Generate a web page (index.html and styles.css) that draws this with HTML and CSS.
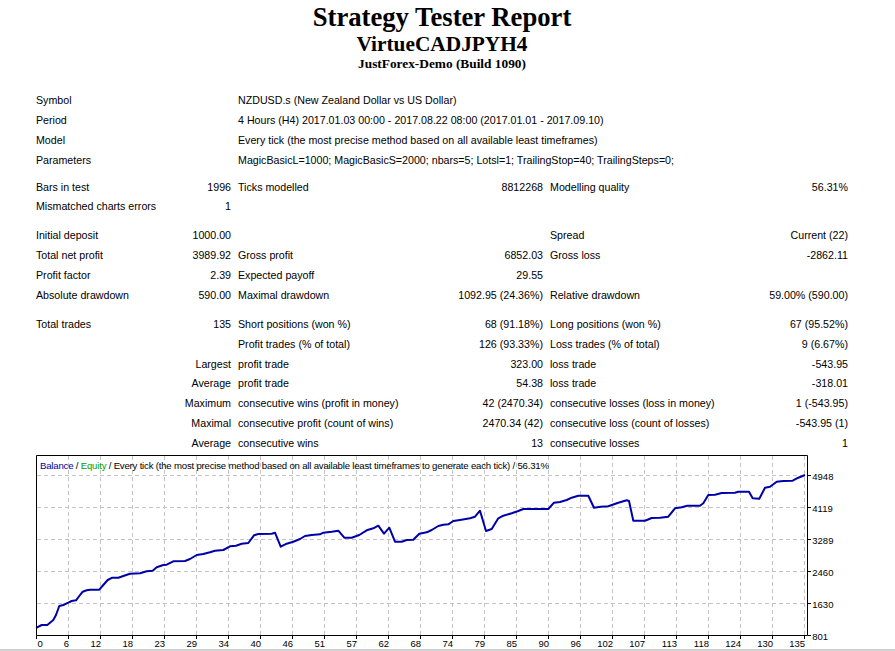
FILE: index.html
```html
<!DOCTYPE html>
<html>
<head>
<meta charset="utf-8">
<title>Strategy Tester: VirtueCADJPYH4</title>
<link rel="stylesheet" href="styles.css">
</head>
<body>
<div class="page">
  <header class="head">
    <div class="h1">Strategy Tester Report</div>
    <div class="h2">VirtueCADJPYH4</div>
    <div class="h3">JustForex-Demo (Build 1090)</div>
  </header>

  <table class="report">
    <colgroup>
      <col class="c1"><col class="c2"><col class="c3"><col class="c4"><col class="c5"><col class="c6">
    </colgroup>
    <tr><td colspan="2">Symbol</td><td colspan="4">NZDUSD.s (New Zealand Dollar vs US Dollar)</td></tr>
    <tr><td colspan="2">Period</td><td colspan="4">4 Hours (H4) 2017.01.03 00:00 - 2017.08.22 08:00 (2017.01.01 - 2017.09.10)</td></tr>
    <tr><td colspan="2">Model</td><td colspan="4">Every tick (the most precise method based on all available least timeframes)</td></tr>
    <tr><td colspan="2">Parameters</td><td colspan="4">MagicBasicL=1000; MagicBasicS=2000; nbars=5; Lotsl=1; TrailingStop=40; TrailingSteps=0;</td></tr>
    <tr class="sp sp-s"><td colspan="6"></td></tr>
    <tr><td>Bars in test</td><td class="r">1996</td><td>Ticks modelled</td><td class="r">8812268</td><td>Modelling quality</td><td class="r">56.31%</td></tr>
    <tr><td>Mismatched charts errors</td><td class="r">1</td><td></td><td></td><td></td><td></td></tr>
    <tr class="sp"><td colspan="6"></td></tr>
    <tr><td>Initial deposit</td><td class="r">1000.00</td><td></td><td></td><td>Spread</td><td class="r">Current (22)</td></tr>
    <tr><td>Total net profit</td><td class="r">3989.92</td><td>Gross profit</td><td class="r">6852.03</td><td>Gross loss</td><td class="r">-2862.11</td></tr>
    <tr><td>Profit factor</td><td class="r">2.39</td><td>Expected payoff</td><td class="r">29.55</td><td></td><td></td></tr>
    <tr><td>Absolute drawdown</td><td class="r">590.00</td><td>Maximal drawdown</td><td class="r">1092.95 (24.36%)</td><td>Relative drawdown</td><td class="r">59.00% (590.00)</td></tr>
    <tr class="sp"><td colspan="6"></td></tr>
    <tr><td>Total trades</td><td class="r">135</td><td>Short positions (won %)</td><td class="r">68 (91.18%)</td><td>Long positions (won %)</td><td class="r">67 (95.52%)</td></tr>
    <tr><td></td><td></td><td>Profit trades (% of total)</td><td class="r">126 (93.33%)</td><td>Loss trades (% of total)</td><td class="r">9 (6.67%)</td></tr>
    <tr><td></td><td class="r">Largest</td><td>profit trade</td><td class="r">323.00</td><td>loss trade</td><td class="r">-543.95</td></tr>
    <tr><td></td><td class="r">Average</td><td>profit trade</td><td class="r">54.38</td><td>loss trade</td><td class="r">-318.01</td></tr>
    <tr><td></td><td class="r">Maximum</td><td>consecutive wins (profit in money)</td><td class="r">42 (2470.34)</td><td>consecutive losses (loss in money)</td><td class="r">1 (-543.95)</td></tr>
    <tr><td></td><td class="r">Maximal</td><td>consecutive profit (count of wins)</td><td class="r">2470.34 (42)</td><td>consecutive loss (count of losses)</td><td class="r">-543.95 (1)</td></tr>
    <tr><td></td><td class="r">Average</td><td>consecutive wins</td><td class="r">13</td><td>consecutive losses</td><td class="r">1</td></tr>
  </table>

  <svg class="chart" width="820" height="200" viewBox="0 0 820 200" xmlns="http://www.w3.org/2000/svg">
    <g class="grid">
      <path d="M5 20.5H775M5 52.5H775M5 84.5H775M5 116.5H775M5 148.5H775"/>
      <path d="M36.5 1V180M68.5 1V180M100.5 1V180M132.5 1V180M164.5 1V180M196.5 1V180M228.5 1V180M260.5 1V180M292.5 1V180M324.5 1V180M356.5 1V180M388.5 1V180M420.5 1V180M452.5 1V180M484.5 1V180M516.5 1V180M548.5 1V180M580.5 1V180M612.5 1V180M644.5 1V180M676.5 1V180M708.5 1V180M740.5 1V180M772.5 1V180"/>
    </g>
    <path class="frame" d="M4.5 0.5H775.5V180.5H4.5Z"/>
    <path class="ticks" d="M775.5 20.5H779M775.5 52.5H779M775.5 84.5H779M775.5 116.5H779M775.5 148.5H779M775.5 180.5H779M4.5 180.5V184M36.5 180.5V184M68.5 180.5V184M100.5 180.5V184M132.5 180.5V184M164.5 180.5V184M196.5 180.5V184M228.5 180.5V184M260.5 180.5V184M292.5 180.5V184M324.5 180.5V184M356.5 180.5V184M388.5 180.5V184M420.5 180.5V184M452.5 180.5V184M484.5 180.5V184M516.5 180.5V184M548.5 180.5V184M580.5 180.5V184M612.5 180.5V184M644.5 180.5V184M676.5 180.5V184M708.5 180.5V184M740.5 180.5V184M772.5 180.5V184"/>
    <polyline class="balance" points="4.7,172.7 9.7,170 15.3,170 21.3,165 24,160 27.3,151 31.3,150 36.3,147.7 39.7,146 44,145.3 47.3,141 50.7,136.7 54.7,135.3 58,134.7 67.3,134.7 71.3,130 75.7,125 80.3,122.7 86.3,122.7 91.3,121 98,118.7 108,118.3 114.7,116.3 120.7,115.7 124.7,112.3 131.3,110 134.7,109.7 141.3,106.3 153,106 158,104 164.7,100 171.3,99 178,97.3 183,95.7 191.3,95 198,91.3 204,90.7 209.7,88.7 216.3,88 222,80.3 226.3,79 239.7,78.7 243,77.7 248.7,91.7 254.7,88.7 261.3,86.7 268,84 273,81 279.7,80 288,79.3 291.3,77.7 299.7,76.7 306.3,75.7 312.3,82.7 319.7,82.7 327.3,80 334.7,75.3 341.3,73.3 346.3,70.7 352,78.7 357.3,72.7 363,86.7 369.7,86.7 374.7,85 381.3,84.7 387.3,78.7 394.7,77.3 399.7,75 406.3,71 411.3,69.7 416.3,69.3 421.3,66 428,65 438,63.3 443,61.7 448,55.7 454,76 459.7,74 466.3,63.3 471.3,60.7 479.7,58.3 486.3,56 491.3,54 516.3,54 522,47.7 528,47 534.7,45 539.7,42.7 546.3,40.7 556.3,40.7 562,52.7 568.7,51.7 576.3,51.3 586.3,47.7 594.7,45.3 597,46 601.3,65.7 613,65.7 619.7,63 628,62.7 636.3,61.7 643,53.3 649.7,52.3 655.3,50.7 668,50.7 671.3,48.3 676.3,40 683,39.7 689.7,38 703,37.7 706.3,36.7 717,36.7 720.7,43.3 727.3,43.7 733,32.7 738,31.7 744.7,26.7 751.3,26 760.7,25.7 766.3,22.7 773,20"/>
    <text class="legend" x="8" y="13.5" textLength="509" lengthAdjust="spacing"><tspan class="lg-bal">Balance</tspan> / <tspan class="lg-eq">Equity</tspan> / Every tick (the most precise method based on all available least timeframes to generate each tick) / 56.31%</text>
    <g class="ylab">
      <text x="780.3" y="25">4948</text>
      <text x="780.3" y="57">4119</text>
      <text x="780.3" y="89">3289</text>
      <text x="780.3" y="121">2460</text>
      <text x="780.3" y="153">1630</text>
      <text x="780.3" y="185">801</text>
    </g>
    <g class="xlab">
      <text x="5.5" y="192" class="first">0</text>
      <text x="37" y="192">6</text>
      <text x="69" y="192">12</text>
      <text x="101" y="192">18</text>
      <text x="133" y="192">23</text>
      <text x="165" y="192">29</text>
      <text x="197" y="192">34</text>
      <text x="229" y="192">40</text>
      <text x="261" y="192">46</text>
      <text x="293" y="192">51</text>
      <text x="325" y="192">57</text>
      <text x="357" y="192">62</text>
      <text x="389" y="192">68</text>
      <text x="421" y="192">74</text>
      <text x="453" y="192">79</text>
      <text x="485" y="192">85</text>
      <text x="517" y="192">90</text>
      <text x="549" y="192">96</text>
      <text x="581" y="192">102</text>
      <text x="613" y="192">107</text>
      <text x="645" y="192">113</text>
      <text x="677" y="192">118</text>
      <text x="709" y="192">124</text>
      <text x="741" y="192">130</text>
      <text x="773" y="192">135</text>
    </g>
  </svg>
</div>
<div class="edge"></div>
</body>
</html>
```

FILE: styles.css
```css
html, body {
  margin: 0;
  background: #ffffff;
}

body {
  padding: 0 8px;
  color: #000000;
  font-family: "Liberation Sans", Arial, sans-serif;
}

.page {
  width: 868px;
}

/* ---------- heading ---------- */
.head {
  padding-top: 2px;
  text-align: center;
  font-family: "Liberation Serif", "Times New Roman", serif;
  font-weight: bold;
}

.h1 {
  font-size: 26.67px;
  line-height: 30px;
}

.h2 {
  font-size: 21.33px;
  line-height: 24px;
}

.h3 {
  font-size: 13.33px;
  line-height: 15px;
}

/* ---------- report table ---------- */
.report {
  width: 820px;
  margin: 19px auto 0;
  border-spacing: 1px;
  border-collapse: separate;
  table-layout: fixed;
  font-size: 10.67px;
}

.report td {
  padding: 3px;
  line-height: 12.88px;
  white-space: nowrap;
  text-align: left;
  vertical-align: middle;
}

.report td.r {
  text-align: right;
}

.c1 { width: 138px; }
.c2 { width: 62px; }
.c3 { width: 207px; }
.c4 { width: 103px; }
.c5 { width: 215px; }
.c6 { width: 88px; }

.report .sp td {
  height: 8px;
  padding: 0;
  line-height: 0;
}

.report .sp-s td {
  height: 6px;
}

/* ---------- chart ---------- */
.chart {
  display: block;
  margin: 1px auto 0;
  background: #ffffff;
  font-family: "Liberation Sans", Arial, sans-serif;
}

.grid path {
  fill: none;
  stroke: #c4c4c4;
  stroke-width: 1;
  stroke-dasharray: 4 3;
}

.frame {
  fill: none;
  stroke: #000000;
  stroke-width: 1;
}

.ticks {
  fill: none;
  stroke: #000000;
  stroke-width: 1;
}

.balance {
  fill: none;
  stroke: #0000a8;
  stroke-width: 2;
  stroke-linejoin: round;
}

.legend {
  font-size: 9.6px;
  fill: #000000;
}

.lg-bal { fill: #0000a0; }
.lg-eq { fill: #00a000; }

.ylab text {
  font-size: 9.5px;
  fill: #000000;
}

.xlab text {
  font-size: 9.5px;
  fill: #000000;
  text-anchor: end;
}

.xlab text.first {
  text-anchor: start;
}

/* thin grey edge along the bottom of the window */
.edge {
  position: fixed;
  left: 0;
  right: 0;
  bottom: 0;
  height: 2px;
  background: #cfcfcf;
}
```
